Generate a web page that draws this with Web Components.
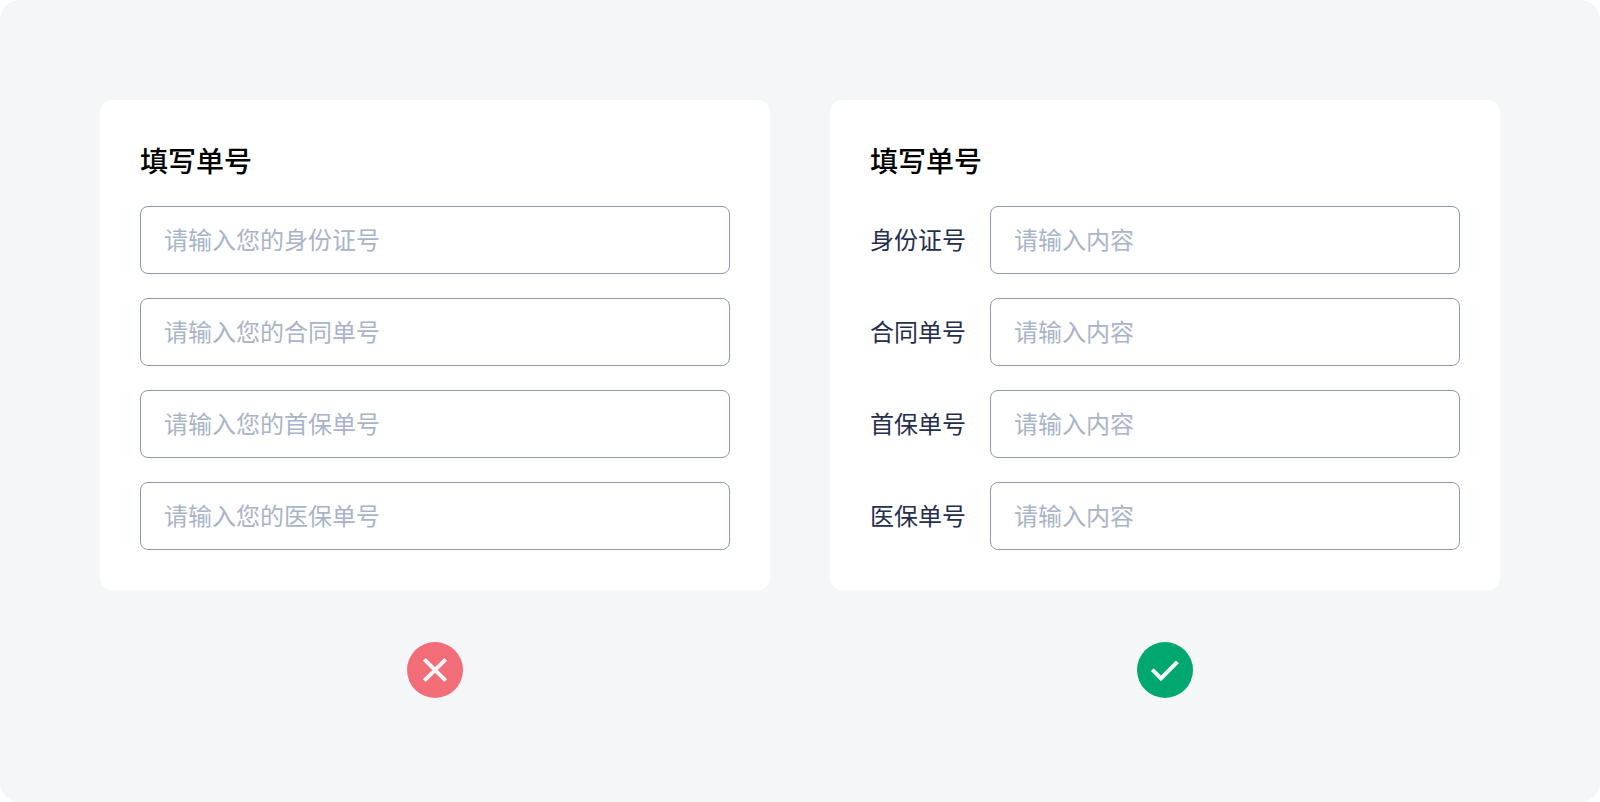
<!DOCTYPE html>
<html lang="zh-CN">
<head>
<meta charset="utf-8">
<meta name="viewport" content="width=device-width, initial-scale=1">
<title>填写单号</title>
<style>
  body {
    margin: 0;
    background: #fff;
    font-family: "Noto Sans CJK SC", sans-serif;
  }
</style>
</head>
<body>
<guide-board>
  <guide-example verdict="bad">
    <form-card heading="填写单号">
      <form-field hint="请输入您的身份证号"></form-field>
      <form-field hint="请输入您的合同单号"></form-field>
      <form-field hint="请输入您的首保单号"></form-field>
      <form-field hint="请输入您的医保单号"></form-field>
    </form-card>
  </guide-example>
  <guide-example verdict="good">
    <form-card heading="填写单号">
      <form-field label="身份证号" hint="请输入内容"></form-field>
      <form-field label="合同单号" hint="请输入内容"></form-field>
      <form-field label="首保单号" hint="请输入内容"></form-field>
      <form-field label="医保单号" hint="请输入内容"></form-field>
    </form-card>
  </guide-example>
</guide-board>

<script>
class GuideBoard extends HTMLElement {
  constructor() {
    super();
    this.attachShadow({ mode: 'open' }).innerHTML = `
      <style>
        :host {
          display: grid;
          grid-template-columns: 1fr 1fr;
          align-items: start;
          gap: 60px;
          box-sizing: border-box;
          min-height: 100vh;
          padding: 100px;
          border-radius: 20px;
          background: #f4f6f8;
        }
      </style>
      <slot></slot>`;
  }
}

class GuideExample extends HTMLElement {
  constructor() {
    super();
    this.attachShadow({ mode: 'open' }).innerHTML = `
      <style>
        :host {
          display: flex;
          flex-direction: column;
          gap: 52px;
          min-width: 0;
        }
        verdict-mark { align-self: center; }
      </style>
      <slot></slot>
      <verdict-mark kind="${this.getAttribute('verdict')}"></verdict-mark>`;
  }
}

class VerdictMark extends HTMLElement {
  connectedCallback() {
    if (this.shadowRoot) return;
    const good = this.getAttribute('kind') === 'good';
    this.attachShadow({ mode: 'open' }).innerHTML = `
      <style>
        :host { display: block; width: 56px; height: 56px; }
        svg { display: block; width: 100%; height: 100%; }
      </style>
      <svg viewBox="0 0 56 56" role="img" aria-label="${good ? '正确' : '错误'}">
        <circle cx="28" cy="28" r="28" fill="${good ? '#00a870' : '#f36d78'}"/>
        <path d="${good ? 'M15.3 27.6 24 36.3 40.4 19.9' : 'M17.3 17.3 38.7 38.7M38.7 17.3 17.3 38.7'}"
              fill="none" stroke="#f4f6f8" stroke-width="4"/>
      </svg>`;
  }
}

class FormCard extends HTMLElement {
  constructor() {
    super();
    this.attachShadow({ mode: 'open' }).innerHTML = `
      <style>
        :host {
          display: flex;
          flex-direction: column;
          gap: 24px;
          padding: 40px;
          border-radius: 12px;
          background: #fff;
        }
        h2 {
          margin: 0;
          padding-bottom: 2px;
          color: #000;
          font-size: 28px;
          font-weight: 500;
          line-height: 40px;
        }
      </style>
      <h2>${this.getAttribute('heading')}</h2>
      <slot></slot>`;
  }
}

class FormField extends HTMLElement {
  constructor() {
    super();
    const label = this.getAttribute('label');
    const hint = this.getAttribute('hint');
    this.attachShadow({ mode: 'open' }).innerHTML = `
      <style>
        :host {
          display: flex;
          align-items: center;
          gap: 24px;
          font-size: 24px;
          line-height: 36px;
        }
        label { flex: none; padding-bottom: 2px; color: #242e4d; }
        input {
          flex: 1;
          min-width: 0;
          height: 68px;
          box-sizing: border-box;
          padding: 0 23px 4px;
          border: 1px solid #8f9bb2;
          border-radius: 8px;
          background: #fff;
          color: #242e4d;
          font: inherit;
        }
        input::placeholder { color: #a9b4c8; opacity: 1; }
      </style>
      ${label ? `<label for="field">${label}</label>` : ''}
      <input id="field" type="text" placeholder="${hint}"${label ? '' : ` aria-label="${hint}"`}>`;
  }
}

customElements.define('verdict-mark', VerdictMark);
customElements.define('form-field', FormField);
customElements.define('form-card', FormCard);
customElements.define('guide-example', GuideExample);
customElements.define('guide-board', GuideBoard);
</script>
</body>
</html>
